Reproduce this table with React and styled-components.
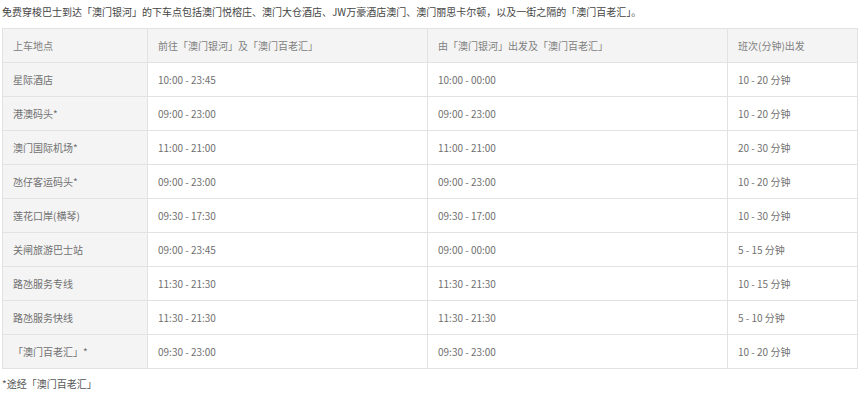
import styled, { createGlobalStyle } from "styled-components";

const GlobalStyle = createGlobalStyle`
  html, body {
    margin: 0;
    padding: 0;
    background: #fff;
  }
  body {
    font-family: "Noto Sans CJK SC", "Liberation Sans", sans-serif;
  }
`;

const rows = [
  ["星际酒店", "10:00 - 23:45", "10:00 - 00:00", "10 - 20 分钟"],
  ["港澳码头*", "09:00 - 23:00", "09:00 - 23:00", "10 - 20 分钟"],
  ["澳门国际机场*", "11:00 - 21:00", "11:00 - 21:00", "20 - 30 分钟"],
  ["氹仔客运码头*", "09:00 - 23:00", "09:00 - 23:00", "10 - 20 分钟"],
  ["莲花口岸(横琴)", "09:30 - 17:30", "09:30 - 17:00", "10 - 30 分钟"],
  ["关闸旅游巴士站", "09:00 - 23:45", "09:00 - 00:00", "5 - 15 分钟"],
  ["路氹服务专线", "11:30 - 21:30", "11:30 - 21:30", "10 - 15 分钟"],
  ["路氹服务快线", "11:30 - 21:30", "11:30 - 21:30", "5 - 10 分钟"],
  ["「澳门百老汇」*", "09:30 - 23:00", "09:30 - 23:00", "10 - 20 分钟"],
];

export default function App() {
  return (
    <Page>
      <GlobalStyle />
      <Intro>
        免费穿梭巴士到达「澳门银河」的下车点包括澳门悦榕庄、澳门大仓酒店、JW万豪酒店澳门、澳门丽思卡尔顿，以及一街之隔的「澳门百老汇」。
      </Intro>
      <Table>
        <colgroup>
          <col style={{ width: 145 }} />
          <col style={{ width: 280 }} />
          <col style={{ width: 300 }} />
          <col style={{ width: 130 }} />
        </colgroup>
        <thead>
          <tr>
            <Head>上车地点</Head>
            <Head>前往「澳门银河」及「澳门百老汇」</Head>
            <Head>由「澳门银河」出发及「澳门百老汇」</Head>
            <Head>班次(分钟)出发</Head>
          </tr>
        </thead>
        <tbody>
          {rows.map((r) => (
            <tr key={r[0]}>
              <Cell $shade>{r[0]}</Cell>
              <Cell>{r[1]}</Cell>
              <Cell>{r[2]}</Cell>
              <Cell>{r[3]}</Cell>
            </tr>
          ))}
        </tbody>
      </Table>
      <Note>*途经「澳门百老汇」</Note>
    </Page>
  );
}

const Page = styled.div`
  width: 867px;
  height: 400px;
  overflow: hidden;
  padding: 4px 0 0 2px;
  box-sizing: border-box;
`;

const Intro = styled.p`
  margin: 0 0 8px;
  font-size: 10px;
  line-height: 16px;
  color: #444;
  white-space: nowrap;
`;

const Table = styled.table`
  border-collapse: collapse;
  table-layout: fixed;
  width: 855px;
  border: 1px solid #e2e2e2;
`;

const Head = styled.th`
  height: 33px;
  padding: 0 10px;
  text-align: left;
  font-weight: normal;
  font-size: 10px;
  color: #808080;
  background: #f4f4f4;
  border: 1px solid #e2e2e2;
  white-space: nowrap;
`;

const Cell = styled.td`
  height: 33px;
  padding: 0 10px;
  font-size: 10px;
  color: #707070;
  background: ${(p) => (p.$shade ? "#f4f4f4" : "#fff")};
  border: 1px solid #e2e2e2;
  white-space: nowrap;
`;

const Note = styled.p`
  margin: 7px 0 0;
  font-size: 10px;
  line-height: 16px;
  color: #555;
`;
